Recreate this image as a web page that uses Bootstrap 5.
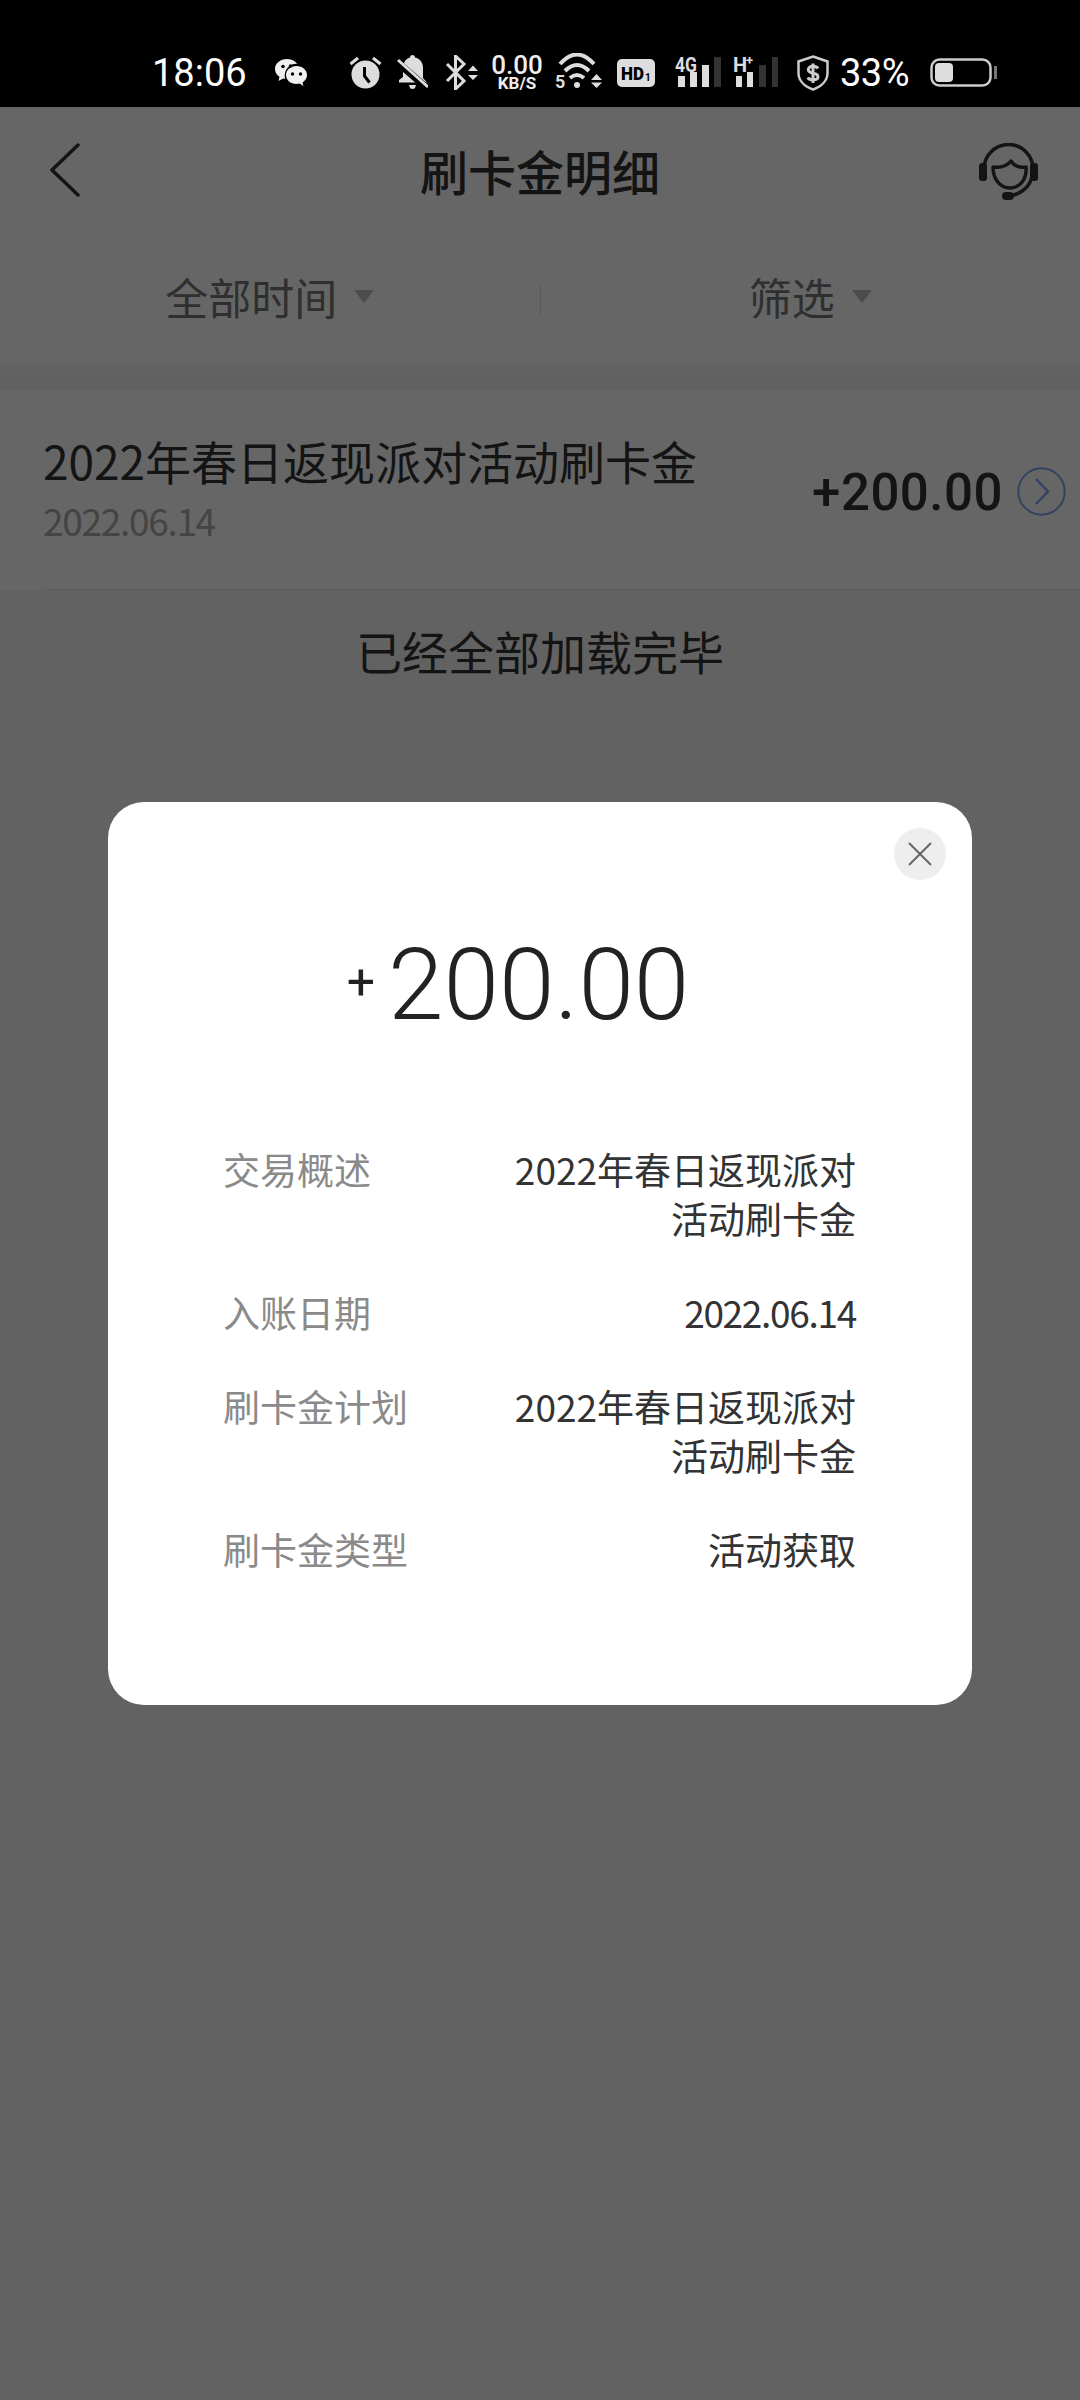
<!DOCTYPE html>
<html lang="zh">
<head>
<meta charset="utf-8">
<title>刷卡金明细</title>
<link href="https://cdn.jsdelivr.net/npm/bootstrap@5.3.0/dist/css/bootstrap.min.css" rel="stylesheet">
<style>
html,body{width:1080px;height:2400px;margin:0;overflow:hidden}
body{background:#f6f6f6;font-family:"Noto Sans CJK SC","Liberation Sans",sans-serif;position:relative}
svg{display:block;flex:none}
.status-bar{height:107px;background:#000;padding:38px 0 0 152px;color:#fff;position:relative;z-index:3;font-family:Roboto,sans-serif}
.sb-time{font-size:38px;line-height:1;width:93px;flex:none}
.sb-wechat{margin-left:30px}.sb-alarm{margin-left:41px}.sb-bell{margin-left:15px}.sb-bt{margin-left:17px}
.sb-net{margin-left:13px;width:52px;flex:none;font-weight:500;text-align:center;color:#eee}
.sb-net-top{font-size:26px;line-height:22px}
.sb-net-bot{font-size:17px;line-height:15px;font-weight:700}
.sb-wifi{margin-left:12px}.sb-hd{margin-left:15px}.sb-sig1{margin-left:20px}.sb-sig2{margin-left:12px}.sb-shield{margin-left:19px}
.sb-pct{margin-left:11px;width:68px;flex:none;font-size:38px;line-height:1;white-space:nowrap;letter-spacing:-.5px}
.sb-batt{margin-left:22px}
.top-nav{height:130px;padding:0 42px 0 50px;background:#fff}
.top-side{width:59px;flex:none}
.top-back{margin-top:-4px}
.top-title{font-size:48px;font-weight:500;color:#333;line-height:1.2;margin:-2px 8px 0 0}
.filter-bar{height:126px;background:#fff}
.filter-cell{font-size:43px;color:#777;line-height:1.2}
.filter-label{margin-bottom:6px}
.filter-tri{width:0;height:0;border-left:10px solid transparent;border-right:10px solid transparent;border-top:13px solid #bbb;margin-left:17px;margin-bottom:8px}
.filter-div{width:1px;height:32px;background:#e4e4e4}
.band{height:27px;background:linear-gradient(#f6f6f6,#efefef)}
.bill-row{background:#fff;padding-left:43px}
.bill-inner{height:200px;padding:39px 14px 0 0;border-bottom:1px solid #ebebeb}
.bill-title{font-size:46px;line-height:62px;color:#333;white-space:nowrap}
.bill-date{font-size:37px;line-height:44px;margin-top:7px;color:#aaa;letter-spacing:-1.3px}
.bill-amt{font-family:Roboto,sans-serif;font-weight:500;font-size:51px;line-height:60px;letter-spacing:.5px;color:#333;margin-top:6px;white-space:nowrap}
.bill-right{margin-top:-39px;height:199px}
.bill-arrow{margin-left:14px;margin-top:4px}
.load-done{font-size:46px;line-height:60px;color:#333;text-align:center;margin-top:30px}
.scrim{position:absolute;left:0;top:107px;width:1080px;height:2293px;background:rgba(0,0,0,.6);z-index:2}
.dlg{width:864px;height:903px;background:#fff;border-radius:36px;border:0;color:#333}
.dlg-head{padding:26px 26px 0}
.dlg-close{width:52px;height:52px;background:#eee;border:0;padding:0}
.dlg-amt{margin-top:45px;height:120px;padding-right:44px;font-family:Roboto,sans-serif;color:#222}
.dlg-plus{font-size:50px;font-weight:400;margin-right:13px;margin-top:-6px;line-height:1}
.dlg-num{font-size:100px;font-weight:300;line-height:120px}
.dlg-list{margin-top:100px;padding:0 116px 0 115px;font-size:37px;line-height:49px;gap:45px}
.dlg-label{color:#8a8a8a;white-space:nowrap}
.dlg-val{color:#333;text-align:right;width:345px}
.dlg-date{letter-spacing:-1.3px}
</style>
</head>
<body>
<div class="status-bar d-flex align-items-center">
  <span class="sb-time">18:06</span>
  <svg class="sb-wechat" width="33" height="28" viewBox="0 0 33 28"><path d="M12 0C5 0 0 4.500 0 10c0 3.200 1.700 6 4.500 7.800L3.500 22l4.700-2.500c1.300.4 2.500.6 3.800.6 6.800 0 12-4.500 12-10S18.800 0 12 0z" fill="#f0f0f0"/><circle cx="21.500" cy="16.500" r="11.800" fill="#000"/><path d="M21.500 7C15.500 7 11 11 11 16s4.500 9 10.500 9c1 0 2-.1 3-.4l4 2.400-1-3.600c2.700-1.700 4.500-4.400 4.500-7.400 0-5-4.500-9-10.500-9z" fill="#f0f0f0"/><circle cx="8" cy="7.500" r="1.800" fill="#000"/><circle cx="15.500" cy="7" r="1.800" fill="#000"/><circle cx="17.500" cy="15" r="1.700" fill="#000"/><circle cx="25.500" cy="15" r="1.700" fill="#000"/></svg>
  <svg class="sb-alarm" width="33" height="33" viewBox="0 0 33 33"><circle cx="16.500" cy="18.500" r="14" fill="#ddd"/><path d="M15.500 11v9l5 6.500" fill="none" stroke="#000" stroke-width="3"/><path d="M1.500 8 9 2M31.500 8 24 2" stroke="#ddd" stroke-width="3" fill="none"/></svg>
  <svg class="sb-bell" width="31" height="35" viewBox="0 0 31 35"><path d="M15.500 0c1.500 0 2.500 1 2.500 2.500 4.800 1 8 5 8 10V23l4 4.500H2V25l4-3V12.500c0-5 3.200-9 7-10C13 1 14 0 15.500 0z" fill="#ddd"/><path d="M12 30h7l-1 3c-1 1.200-4 1.200-5 0z" fill="#ddd"/><path d="M0 7 31 34" stroke="#000" stroke-width="7"/><path d="M1 5 31 32" stroke="#ddd" stroke-width="3"/></svg>
  <svg class="sb-bt" width="33" height="35" viewBox="0 0 33 35"><path d="M2 9 19 26 10.500 34V1L19 9 2 26" fill="none" stroke="#ddd" stroke-width="3"/><path d="M28 10.500 33 16H23zM28 25 33 20H23z" fill="#ddd"/></svg>
  <div class="sb-net"><div class="sb-net-top">0.00</div><div class="sb-net-bot">KB/S</div></div>
  <svg class="sb-wifi" width="47" height="39" viewBox="0 -2 47 39"><text x="0" y="33" font-family="Roboto,sans-serif" font-size="18" font-weight="700" fill="#ddd">5</text><g fill="none" stroke="#ddd" stroke-width="4"><path d="M5 9Q22-10 39 9"/><path d="M10 16Q22 4 34 16"/><path d="M15 23Q22 17 29 23"/></g><circle cx="22" cy="30" r="3" fill="#ddd"/><path d="M41.500 19 47 25H36zM41.500 33 47 27.500H36z" fill="#ddd"/></svg>
  <svg class="sb-hd" width="38" height="28" viewBox="0 0 38 28"><rect width="38" height="28" rx="5" fill="#ddd"/><text x="4" y="21" font-family="Roboto,sans-serif" font-size="19" font-weight="900" fill="#000" textLength="23" lengthAdjust="spacingAndGlyphs">HD</text><text x="28" y="22" font-family="Roboto,sans-serif" font-size="10" font-weight="700" fill="#000">1</text></svg>
  <svg class="sb-sig1" width="46" height="39" viewBox="0 -2 46 39"><text x="0" y="17" font-family="Roboto,sans-serif" font-size="20" font-weight="700" fill="#ddd" textLength="22" lengthAdjust="spacingAndGlyphs">4G</text><rect x="3" y="21" width="7" height="11" fill="#ddd"/><rect x="15" y="17" width="7" height="15" fill="#ddd"/><rect x="27" y="10" width="7" height="22" fill="#ddd"/><rect x="39" y="2" width="7" height="30" fill="#333"/></svg>
  <svg class="sb-sig2" width="45" height="39" viewBox="0 -2 45 39"><text x="0" y="17" font-family="Roboto,sans-serif" font-size="20" font-weight="700" fill="#ddd">H</text><text x="13" y="10" font-family="Roboto,sans-serif" font-size="13" font-weight="700" fill="#ddd">+</text><rect x="3" y="21" width="6" height="11" fill="#ddd"/><rect x="14" y="17" width="6" height="15" fill="#ddd"/><rect x="26" y="10" width="7" height="22" fill="#333"/><rect x="39" y="2" width="6" height="30" fill="#333"/></svg>
  <svg class="sb-shield" width="32" height="36" viewBox="0 0 32 36"><path d="M16 1.500 30.500 6.500V18c0 7.500-6 13.500-14.500 16.500C7.500 31.500 1.500 25.500 1.500 18V6.500z" fill="none" stroke="#ccc" stroke-width="2.500"/><path d="M21 13.500c-1-1.500-2.800-2.200-5-2.200-2.800 0-4.700 1.300-4.700 3.500 0 4.800 9.700 2.300 9.700 6.800 0 2.200-2 3.400-5 3.400-2.300 0-4.200-.8-5.200-2.500M16 8.500v19.500" fill="none" stroke="#ccc" stroke-width="3"/></svg>
  <span class="sb-pct">33%</span>
  <svg class="sb-batt" width="67" height="29" viewBox="0 0 67 29"><rect x="1.500" y="1.500" width="59" height="26" rx="8" fill="none" stroke="#ccc" stroke-width="2.500"/><rect x="5" y="5" width="18" height="19" rx="4" fill="#ddd"/><rect x="64" y="8" width="3" height="13" fill="#777"/></svg>
</div>

<header class="top-nav d-flex align-items-center justify-content-between">
  <div class="top-side top-back"><svg width="30" height="54" viewBox="0 0 30 54"><path d="M28 2 2 27 28 52" fill="none" stroke="#333" stroke-width="3.500" stroke-linecap="round" stroke-linejoin="round"/></svg></div>
  <span class="top-title">刷卡金明细</span>
  <div class="top-side"><svg width="59" height="58" viewBox="0 0 59 58"><path d="M5 26a24.500 24.500 0 0 1 49 0c0 14-8 24-23 27" fill="none" stroke="#333" stroke-width="3.500"/><rect x="0" y="20" width="8" height="18" rx="3" fill="#333"/><rect x="51" y="20" width="8" height="18" rx="3" fill="#333"/><rect x="23" y="49" width="12" height="8" rx="4" fill="#333"/><path d="M14 24c7 1 14-1 18-6 3 5 9 7 15 6 1 12-6 21-16 21-10 0-17-9-17-21z" fill="none" stroke="#333" stroke-width="3.500" stroke-linejoin="round"/></svg></div>
</header>

<nav class="filter-bar d-flex align-items-center">
  <div class="filter-cell flex-fill w-50 d-flex align-items-center justify-content-center"><span class="filter-label">全部时间</span><i class="filter-tri"></i></div>
  <div class="filter-div"></div>
  <div class="filter-cell flex-fill w-50 d-flex align-items-center justify-content-center"><span class="filter-label">筛选</span><i class="filter-tri"></i></div>
</nav>
<div class="band"></div>

<section class="bill-row">
  <div class="bill-inner d-flex justify-content-between">
    <div>
      <div class="bill-title">2022年春日返现派对活动刷卡金</div>
      <div class="bill-date">2022.06.14</div>
    </div>
    <div class="bill-right d-flex align-items-center">
      <span class="bill-amt">+200.00</span>
      <svg class="bill-arrow" width="49" height="49" viewBox="0 0 49 49"><circle cx="24.500" cy="24.500" r="23.200" fill="none" stroke="#7aa6f5" stroke-width="2"/><path d="M19 12 31 24.500 19 37" fill="none" stroke="#7aa6f5" stroke-width="2.500"/></svg>
    </div>
  </div>
</section>
<p class="load-done mb-0">已经全部加载完毕</p>

<div class="scrim d-flex align-items-center justify-content-center">
  <div class="dlg d-flex flex-column">
    <div class="dlg-head d-flex justify-content-end">
      <button type="button" class="dlg-close rounded-circle d-flex align-items-center justify-content-center" aria-label="关闭"><svg width="24" height="24" viewBox="0 0 24 24"><path d="M1 1 23 23M23 1 1 23" stroke="#666" stroke-width="2"/></svg></button>
    </div>
    <div class="dlg-amt d-flex align-items-center justify-content-center"><span class="dlg-plus">+</span><span class="dlg-num">200.00</span></div>
    <div class="dlg-list d-flex flex-column">
      <div class="d-flex justify-content-between"><span class="dlg-label">交易概述</span><span class="dlg-val">2022年春日返现派对活动刷卡金</span></div>
      <div class="d-flex justify-content-between"><span class="dlg-label">入账日期</span><span class="dlg-val dlg-date">2022.06.14</span></div>
      <div class="d-flex justify-content-between"><span class="dlg-label">刷卡金计划</span><span class="dlg-val">2022年春日返现派对活动刷卡金</span></div>
      <div class="d-flex justify-content-between"><span class="dlg-label">刷卡金类型</span><span class="dlg-val">活动获取</span></div>
    </div>
  </div>
</div>
<script src="https://cdn.jsdelivr.net/npm/bootstrap@5.3.0/dist/js/bootstrap.bundle.min.js"></script>
</body>
</html>
